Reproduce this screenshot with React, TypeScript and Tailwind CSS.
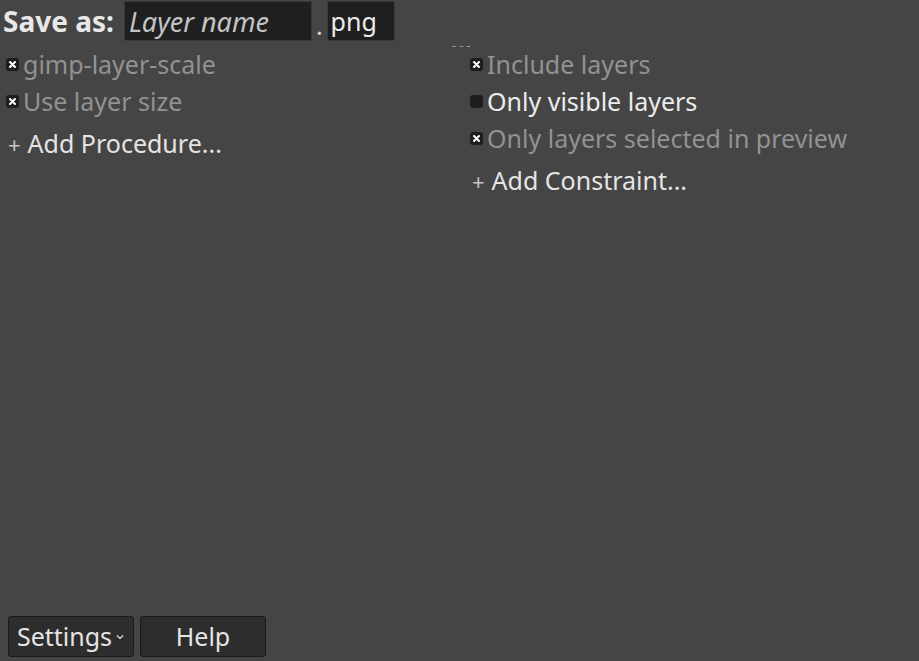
import React from 'react';

const font = { fontFamily: '"Noto Sans", "Open Sans", sans-serif' };

function Check({ checked }: { checked: boolean }) {
  return (
    <span className="flex h-[13px] w-[13px] shrink-0 items-center justify-center rounded-[3px] bg-[#1e1e1e]">
      {checked && (
        <svg width="9" height="9" viewBox="0 0 9 9">
          <path d="M2 2 L7 7 M7 2 L2 7" stroke="#ffffff" strokeWidth="2" strokeLinecap="round" />
        </svg>
      )}
    </span>
  );
}

function Option({ label, checked, active }: { label: string; checked: boolean; active?: boolean }) {
  return (
    <div className="flex h-[37px] items-center gap-[4px]">
      <Check checked={checked} />
      <span className={active ? 'text-[#ececec]' : 'text-[#929292]'}>{label}</span>
    </div>
  );
}

function AddRow({ label }: { label: string }) {
  return (
    <div className="mt-[3px] flex h-[41px] items-center gap-[7px] pl-[2px] text-[#e4e4e4]">
      <span className="text-[22px] text-[#c4c4c4]">+</span>
      <span>{label}</span>
    </div>
  );
}

export default function App() {
  return (
    <div className="flex h-[661px] w-[919px] flex-col bg-[#454545] text-[25px] leading-none" style={font}>
      {/* Save as */}
      <div className="flex h-[42px] items-center pl-[3px]">
        <span className="mr-[10px] text-[28px] font-bold text-[#e8e8e8]">Save as:</span>
        <div className="flex h-[40px] w-[188px] items-center border border-[#3a3a3a] bg-[#1f1f1f] px-[4px] text-[27px] italic text-[#c4c4c4]">
          Layer name
        </div>
        <span className="mx-[4px] self-end pb-[4px] text-[#d8d8d8]">.</span>
        <div className="flex h-[40px] w-[68px] items-center border border-[#3a3a3a] bg-[#1f1f1f] px-[3px] text-[#ececec]">
          png
        </div>
      </div>

      <div className="flex flex-1">
        {/* procedures */}
        <div className="flex w-[470px] flex-col pl-[6px] pt-[4px]">
          <Option label="gimp-layer-scale" checked />
          <Option label="Use layer size" checked />
          <AddRow label="Add Procedure..." />
        </div>

        {/* constraints */}
        <div className="flex flex-1 flex-col">
          <div className="-mt-[3px] mb-[-1px] h-[8px] text-[13px] leading-none text-[#a0a0a0]">
            <span className="-ml-[18px] tracking-[3px]">---</span>
          </div>
          <div className="flex flex-col">
            <Option label="Include layers" checked />
            <Option label="Only visible layers" checked={false} active />
            <Option label="Only layers selected in preview" checked />
            <AddRow label="Add Constraint..." />
          </div>
        </div>
      </div>

      {/* footer */}
      <div className="flex gap-[6px] pb-[4px] pl-[8px]">
        <button className="flex h-[41px] w-[126px] items-center justify-center gap-[3px] rounded-[3px] border border-[#1a1a1a] bg-[#2d2d2d] text-[#e4e4e4]">
          Settings
          <svg width="10" height="10" viewBox="0 0 10 10">
            <path d="M2 3.5 L5 6.5 L8 3.5" stroke="#e4e4e4" strokeWidth="1.2" fill="none" />
          </svg>
        </button>
        <button className="flex h-[41px] w-[126px] items-center justify-center rounded-[3px] border border-[#1a1a1a] bg-[#2d2d2d] text-[#e4e4e4]">
          Help
        </button>
      </div>
    </div>
  );
}
